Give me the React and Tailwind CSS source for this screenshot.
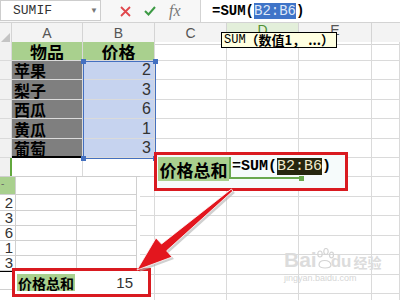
import React from "react";

const CJK = { fontFamily: '"Noto Sans CJK SC", "Liberation Sans", sans-serif' };
const MONO = { fontFamily: '"Liberation Mono", "Noto Sans CJK SC", monospace' };
const SANS = { fontFamily: '"Liberation Sans", "Noto Sans CJK SC", sans-serif' };

const heights = [19, 19, 20, 19, 20, 19, 19, 20, 19, 20, 19, 20, 19, 20];
const names = ["苹果", "梨子", "西瓜", "黄瓜", "葡萄"];
const prices = [2, 3, 6, 1, 3];
const COLS = "grid grid-cols-[12px_71px_72px_72px_72px_73px_28px]";

function Cell({ className = "", children, style }) {
  return (
    <div className={"border-r border-b border-[#dadada] overflow-hidden " + className} style={style}>
      {children}
    </div>
  );
}

function Row({ i }) {
  const h = heights[i] === 19 ? "h-[19px]" : "h-[20px]";
  let a = null;
  let b = null;
  let aCls = "";
  let bCls = "";
  if (i === 0) {
    aCls = "bg-[#a9d08e] flex items-center justify-center font-bold text-[17px] leading-none text-black";
    bCls = "bg-[#a9d08e] flex items-center justify-center font-bold text-[17px] leading-none text-black";
    a = <span className="leading-none" style={CJK}>物品</span>;
    b = <span className="leading-none" style={CJK}>价格</span>;
  } else if (i >= 1 && i <= 5) {
    aCls =
      "bg-[#7f7f7f] flex items-center pl-[2px] font-bold text-[16px] leading-none text-black" +
      (i === 5 ? " !border-b-2 !border-b-black" : "");
    bCls = "bg-[#c6d3ef] flex items-center justify-end pr-[3px] text-[16px] leading-none text-[#333] border-[#9fb0d6]";
    a = <span className="leading-none" style={CJK}>{names[i - 1]}</span>;
    b = <span className="leading-none" style={SANS}>{prices[i - 1]}</span>;
  }
  return (
    <div className={COLS + " " + h}>
      <Cell
        className={
          "bg-[#f1f1f1] " + (i === 6 ? "!border-r-2 !border-r-[#62a83e]" : "")
        }
      />
      <Cell className={aCls}>{a}</Cell>
      <Cell className={bCls}>{b}</Cell>
      <Cell />
      <Cell />
      <Cell />
      <Cell />
    </div>
  );
}

export default function App() {
  return (
    <div className="relative w-[400px] h-[300px] overflow-hidden bg-white" style={SANS}>
      {/* formula bar */}
      <div className="flex h-[23px] bg-[#f7f7f7] border-b border-[#d3d3d3]">
        <div className="w-[101px] h-[21px] bg-white border border-[#cdcdcd] flex items-center justify-between pl-[12px] pr-[2px]">
          <span className="text-[13px] text-[#333]" style={MONO}>SUMIF</span>
          <span className="text-[8px] text-[#777]">▼</span>
        </div>
        <div className="w-[99px] flex items-center pl-[19px] gap-[13px]">
          <svg width="11" height="11" viewBox="0 0 11 11">
            <path d="M1 1 L10 10 M10 1 L1 10" stroke="#e0474c" strokeWidth="1.8" />
          </svg>
          <svg width="12" height="10" viewBox="0 0 12 10">
            <path d="M1 5 L4.5 8.5 L11 1" stroke="#3c9a44" strokeWidth="2" fill="none" />
          </svg>
          <span className="text-[16px] italic text-[#777] leading-none" style={{ fontFamily: '"Liberation Serif", serif' }}>
            fx
          </span>
        </div>
        <div className="flex-1 bg-white border-l border-[#d3d3d3] flex items-center pl-[11px]">
          <span className="text-[14px] font-bold text-black leading-[15px]" style={MONO}>
            =SUM(
            <span className="bg-[#3f74c8] text-[#dfe8f8] font-normal">B2:B6</span>)
          </span>
        </div>
      </div>

      {/* column headers */}
      <div className={COLS + " h-[19px] bg-[#f3f3f3]"}>
        <div className="border-r border-b border-[#d4d4d4] flex items-end justify-end pr-[1px] pb-[2px]">
          <svg width="9" height="9" viewBox="0 0 9 9">
            <path d="M9 0 L9 9 L0 9 Z" fill="#c4c4c4" />
          </svg>
        </div>
        {["A", "B", "C"].map((l) => (
          <div key={l} className="border-r border-b border-[#d4d4d4] flex items-center justify-center text-[14px] text-[#555] font-light">
            {l}
          </div>
        ))}
        <div className="border-r border-b border-[#d4d4d4] bg-[#e3efda] flex items-start justify-center text-[14px] leading-[14px] text-[#4f8f33]">D</div>
        <div className="border-r border-b border-[#d4d4d4] flex items-start justify-center text-[14px] leading-[14px] text-[#555] font-light">E</div>
        <div className="border-b border-[#d4d4d4]" />
      </div>

      {/* rows */}
      {heights.map((_, i) => (
        <Row key={i} i={i} />
      ))}

      {/* selection border */}
      <div className="absolute left-[83px] top-[61px] w-[73px] h-[98px] border border-[#4470c0]" />
      <div className="absolute left-[81px] top-[59px] w-[5px] h-[5px] bg-[#4470c0]" />
      <div className="absolute left-[153px] top-[59px] w-[5px] h-[5px] bg-[#4470c0]" />
      <div className="absolute left-[81px] top-[156px] w-[5px] h-[5px] bg-[#4470c0]" />
      <div className="absolute left-[153px] top-[156px] w-[5px] h-[5px] bg-[#4470c0]" />

      {/* tooltip */}
      <div className="absolute left-[221px] top-[32px] w-[116px] h-[16px] bg-[#ffffe1] border border-black flex items-center pl-[2px] text-[12px] leading-[14px] text-black whitespace-nowrap">
        <span style={MONO}>SUM</span>
        <span className="font-bold text-[13px] leading-[14px]" style={CJK}>（数值1， ...）</span>
      </div>

      {/* pasted lower-left screenshot */}
      <div className="absolute left-0 top-[176px] w-[140px] h-[124px] bg-white border-t border-[#cfcfcf]">
        <div className="grid grid-cols-[16px_61px_60px] h-[18px]">
          <div className="bg-[#a9d08e] border-r border-b border-[#d0d0d0] text-[10px] leading-[14px] text-[#666] pl-[1px]">-</div>
          <div className="border-r border-b border-[#d0d0d0]" />
          <div className="border-r border-b border-[#d0d0d0]" />
        </div>
        {[2, 3, 6, 1, 3].map((n, k) => (
          <div key={k} className="grid grid-cols-[16px_61px_60px] h-[15px]">
            <div className="border-r border-b border-[#d0d0d0] flex items-center justify-end pr-[2px] text-[15px] leading-none text-[#333]">{n}</div>
            <div className="border-r border-b border-[#d0d0d0]" />
            <div className="border-r border-b border-[#d0d0d0]" />
          </div>
        ))}
        <div className="w-[13px] h-[2px] bg-black" />
        <div className="grid grid-cols-[16px_61px_60px] h-[18px]">
          <div className="border-r border-b border-[#d0d0d0]" />
          <div className="border-r border-b border-[#d0d0d0]" />
          <div className="border-r border-b border-[#d0d0d0]" />
        </div>
      </div>

      {/* red box lower */}
      <div className="absolute left-[12px] top-[268px] w-[139px] h-[29px] border-[3px] border-[#d91a20] bg-white flex items-center pl-[2px]">
        <div className="w-[58px] h-[17px] bg-[#a9d08e] flex items-center justify-center text-[14px] leading-none font-bold text-black" style={CJK}>
          价格总和
        </div>
        <div className="w-[58px] text-right text-[15px] leading-none text-[#333]">15</div>
      </div>

      {/* red box upper */}
      <div className="absolute left-[154px] top-[152px] w-[194px] h-[39px] border-[3px] border-[#d91a20] bg-[#f6fbfb] flex items-start pt-[2px] pl-[1px]">
        <div className="w-[71px] h-[24px] bg-[#a9d08e] flex items-center justify-center text-[17px] leading-none font-bold text-black" style={CJK}>
          价格总和
        </div>
        <div className="relative w-[73px] h-[22px] border-l-2 border-b-2 border-[#6aa84f] flex items-center pl-[1px] overflow-visible whitespace-nowrap">
          <span className="text-[15px] font-bold text-black leading-[18px]" style={MONO}>
            =SUM(
            <span className="bg-[#26260f] text-[#f3ecd0] font-normal">B2:B6</span>)
          </span>
          <div className="absolute right-[-2px] bottom-[-4px] w-[5px] h-[5px] bg-[#6aa84f]" />
        </div>
      </div>

      {/* watermark */}
      <div className="absolute left-[284px] top-[248px] text-[#dcdcdc] select-none">
        <div className="flex items-end leading-none">
          <span className="text-[21px] font-bold" style={SANS}>Bai</span>
          <svg width="20" height="22" viewBox="0 0 20 22" className="-ml-[2px]">
            <g fill="none" stroke="#d4d4d4" strokeWidth="1.2">
              <ellipse cx="5" cy="6" rx="2.2" ry="3" />
              <ellipse cx="11" cy="3.5" rx="2.2" ry="3" />
              <ellipse cx="16.5" cy="7" rx="2" ry="2.8" />
              <path d="M4 17 C4 11 15 11 16 17 C16 21 4 21 4 17 Z" />
            </g>
          </svg>
          <span className="text-[17px] font-bold -ml-[4px]" style={SANS}>du</span>
          <span className="text-[14px] font-bold ml-[2px] mb-[1px]" style={CJK}>经验</span>
        </div>
        <div className="text-[9px] leading-[11px] mt-[3px] text-[#d6d6d6]" style={SANS}>jingyan.baidu.com</div>
      </div>

      {/* arrow */}
      <svg className="absolute left-0 top-0 pointer-events-none" width="400" height="300" viewBox="0 0 400 300">
        <polygon
          points="137,270 156,238 161.5,244 231.4,189 232.8,191 166.6,250.8 172,257"
          fill="#b0b0b0"
          transform="translate(2,2)"
          opacity="0.6"
        />
        <polygon
          points="137,270 156,238 161.5,244 231.4,189 232.8,191 166.6,250.8 172,257"
          fill="#e3161e"
          stroke="#ffffff"
          strokeWidth="0.8"
        />
      </svg>
    </div>
  );
}
